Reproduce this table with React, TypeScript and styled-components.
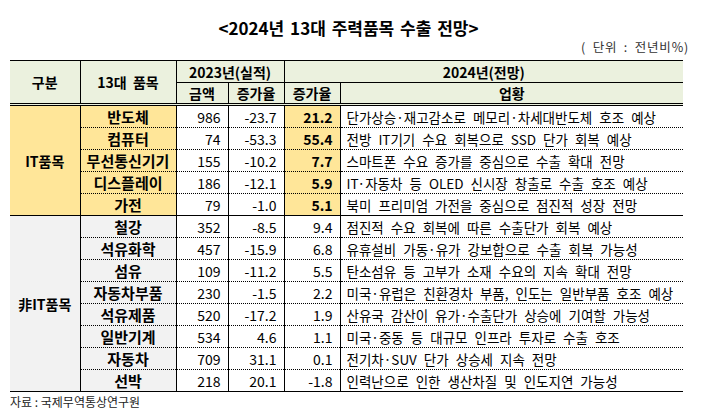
import React, { useLayoutEffect, useRef, useState } from "react";
import styled, { createGlobalStyle } from "styled-components";

const Global = createGlobalStyle`
  html, body { margin: 0; padding: 0; background: #ffffff; }
  body { font-family: "Noto Sans CJK KR", "Noto Sans", sans-serif; color: #000; }
`;

const Page = styled.div`
  width: 704px;
  height: 414px;
  padding: 0 0 0 10px;
  box-sizing: border-box;
  display: flex;
  flex-direction: column;
`;

const Title = styled.div`
  width: 677px;
  text-align: center;
  font-weight: 700;
  font-size: 17px;
  line-height: 22px;
  padding-top: 17px;
  word-spacing: 2px;
`;

const Unit = styled.div`
  width: 679px;
  text-align: right;
  font-size: 12.5px;
  line-height: 16px;
  color: #333;
  height: 21px;
  letter-spacing: 0.8px;
  word-spacing: 3px;
`;

const Table = styled.table`
  border-collapse: collapse;
  table-layout: fixed;
  width: 673px;
  font-size: 14px;
`;

const HeadCell = styled.th<{ $h?: number; $double?: boolean }>`
  background: #ebf1de;
  font-weight: 700;
  font-size: 14px;
  height: ${(p) => p.$h ?? 21}px;
  padding: 0;
  text-align: center;
  word-spacing: 3px;
  border: 1px solid #000;
  border-bottom: ${(p) => (p.$double ? "3px double #000" : "1px solid #000")};
  &:first-child { border-left: none; }
  &:last-child { border-right: none; }
`;

const GroupCell = styled.td<{ $bg: string }>`
  background: ${(p) => p.$bg};
  font-weight: 700;
  text-align: center;
  border: 1px solid #000;
  border-left: none;
  padding: 0;
  font-size: 14px;
`;

const ItemCell = styled.td<{ $bg: string; $last: boolean }>`
  background: ${(p) => p.$bg};
  font-weight: 700;
  font-size: 15px;
  text-align: center;
  height: 21px;
  padding: 0;
  border-left: 1px solid #000;
  border-right: 1px solid #000;
  border-bottom: ${(p) => (p.$last ? "1px solid #000" : "1px dotted #000")};
  line-height: 20px;
`;

const NumCell = styled.td<{ $bg?: string; $bold?: boolean; $last: boolean }>`
  background: ${(p) => p.$bg ?? "#ffffff"};
  font-weight: ${(p) => (p.$bold ? 700 : 400)};
  font-size: 14px;
  text-align: right;
  padding: 0 7px 0 0;
  border-left: 1px solid #000;
  border-right: 1px solid #000;
  border-bottom: ${(p) => (p.$last ? "1px solid #000" : "1px dotted #000")};
  line-height: 20px;
`;

const TextCell = styled.td<{ $last: boolean }>`
  font-size: 13.5px;
  text-align: left;
  padding: 0 0 0 6px;
  white-space: nowrap;
  overflow: hidden;
  border-left: 1px solid #000;
  border-bottom: ${(p) => (p.$last ? "1px solid #000" : "1px dotted #000")};
  line-height: 20px;
`;

const FitSpan = styled.span`
  display: inline-block;
  white-space: nowrap;
  word-spacing: 4px;
`;

const Source = styled.div`
  font-size: 12px;
  color: #222;
  margin-top: 2px;
  line-height: 15px;
`;

function FitText({ text, width }: { text: string; width: number }) {
  const ref = useRef<HTMLSpanElement>(null);
  const [ls, setLs] = useState(0);
  useLayoutEffect(() => {
    const measure = () => {
      const el = ref.current;
      if (!el) return;
      el.style.letterSpacing = "0px";
      const w = el.getBoundingClientRect().width;
      const n = Array.from(text).length;
      const v = (width - w) / Math.max(1, n - 1);
      el.style.letterSpacing = "";
      setLs(v);
    };
    measure();
    if ((document as any).fonts?.ready) (document as any).fonts.ready.then(measure);
  }, [text, width]);
  return (
    <FitSpan ref={ref} style={{ letterSpacing: `${ls}px` }}>
      {text}
    </FitSpan>
  );
}

type Row = { name: string; amt: string; r23: string; r24: string; desc: string; w: number };

const itRows: Row[] = [
  { name: "반도체", amt: "986", r23: "-23.7", r24: "21.2", desc: "단가상승·재고감소로 메모리·차세대반도체 호조 예상", w: 325 },
  { name: "컴퓨터", amt: "74", r23: "-53.3", r24: "55.4", desc: "전방 IT기기 수요 회복으로 SSD 단가 회복 예상", w: 308 },
  { name: "무선통신기기", amt: "155", r23: "-10.2", r24: "7.7", desc: "스마트폰 수요 증가를 중심으로 수출 확대 전망", w: 321 },
  { name: "디스플레이", amt: "186", r23: "-12.1", r24: "5.9", desc: "IT·자동차 등 OLED 신시장 창출로 수출 호조 예상", w: 310 },
  { name: "가전", amt: "79", r23: "-1.0", r24: "5.1", desc: "북미 프리미엄 가전을 중심으로 점진적 성장 전망", w: 321 },
];

const nonItRows: Row[] = [
  { name: "철강", amt: "352", r23: "-8.5", r24: "9.4", desc: "점진적 수요 회복에 따른 수출단가 회복 예상", w: 295 },
  { name: "석유화학", amt: "457", r23: "-15.9", r24: "6.8", desc: "유휴설비 가동·유가 강보합으로 수출 회복 가능성", w: 316 },
  { name: "섬유", amt: "109", r23: "-11.2", r24: "5.5", desc: "탄소섬유 등 고부가 소재 수요의 지속 확대 전망", w: 305 },
  { name: "자동차부품", amt: "230", r23: "-1.5", r24: "2.2", desc: "미국·유럽은 친환경차 부품, 인도는 일반부품 호조 예상", w: 325 },
  { name: "석유제품", amt: "520", r23: "-17.2", r24: "1.9", desc: "산유국 감산이 유가·수출단가 상승에 기여할 가능성", w: 321 },
  { name: "일반기계", amt: "534", r23: "4.6", r24: "1.1", desc: "미국·중동 등 대규모 인프라 투자로 수출 호조", w: 297 },
  { name: "자동차", amt: "709", r23: "31.1", r24: "0.1", desc: "전기차·SUV 단가 상승세 지속 전망", w: 223 },
  { name: "선박", amt: "218", r23: "20.1", r24: "-1.8", desc: "인력난으로 인한 생산차질 및 인도지연 가능성", w: 300 },
];

const YELLOW = "#ffe699";
const GRAY = "#f2f2f2";

function Section({ label, rows, bg, highlight }: { label: string; rows: Row[]; bg: string; highlight: boolean }) {
  return (
    <>
      {rows.map((r, i) => {
        const last = i === rows.length - 1;
        return (
          <tr key={r.name}>
            {i === 0 && (
              <GroupCell $bg={bg} rowSpan={rows.length}>
                {label}
              </GroupCell>
            )}
            <ItemCell $bg={bg} $last={last}>{r.name}</ItemCell>
            <NumCell $last={last}>{r.amt}</NumCell>
            <NumCell $last={last}>{r.r23}</NumCell>
            <NumCell $last={last} $bg={highlight ? YELLOW : undefined} $bold={highlight}>
              {r.r24}
            </NumCell>
            <TextCell $last={last}>
              <FitText text={r.desc} width={r.w} />
            </TextCell>
          </tr>
        );
      })}
    </>
  );
}

export default function App() {
  return (
    <Page>
      <Global />
      <Title>&lt;2024년 13대 주력품목 수출 전망&gt;</Title>
      <Unit>( 단위 : 전년비%)</Unit>
      <Table>
        <colgroup>
          <col style={{ width: 70 }} />
          <col style={{ width: 96 }} />
          <col style={{ width: 52 }} />
          <col style={{ width: 56 }} />
          <col style={{ width: 56 }} />
          <col style={{ width: 343 }} />
        </colgroup>
        <thead>
          <tr>
            <HeadCell rowSpan={2} $double>구분</HeadCell>
            <HeadCell rowSpan={2} $double>13대 품목</HeadCell>
            <HeadCell colSpan={2} $h={21}>2023년(실적)</HeadCell>
            <HeadCell colSpan={2} $h={21}>2024년(전망)</HeadCell>
          </tr>
          <tr>
            <HeadCell $h={18} $double>금액</HeadCell>
            <HeadCell $h={18} $double>증가율</HeadCell>
            <HeadCell $h={18} $double>증가율</HeadCell>
            <HeadCell $h={18} $double>업황</HeadCell>
          </tr>
        </thead>
        <tbody>
          <Section label="IT품목" rows={itRows} bg={YELLOW} highlight />
          <Section label="非IT품목" rows={nonItRows} bg={GRAY} highlight={false} />
        </tbody>
      </Table>
      <Source>자료 : 국제무역통상연구원</Source>
    </Page>
  );
}
